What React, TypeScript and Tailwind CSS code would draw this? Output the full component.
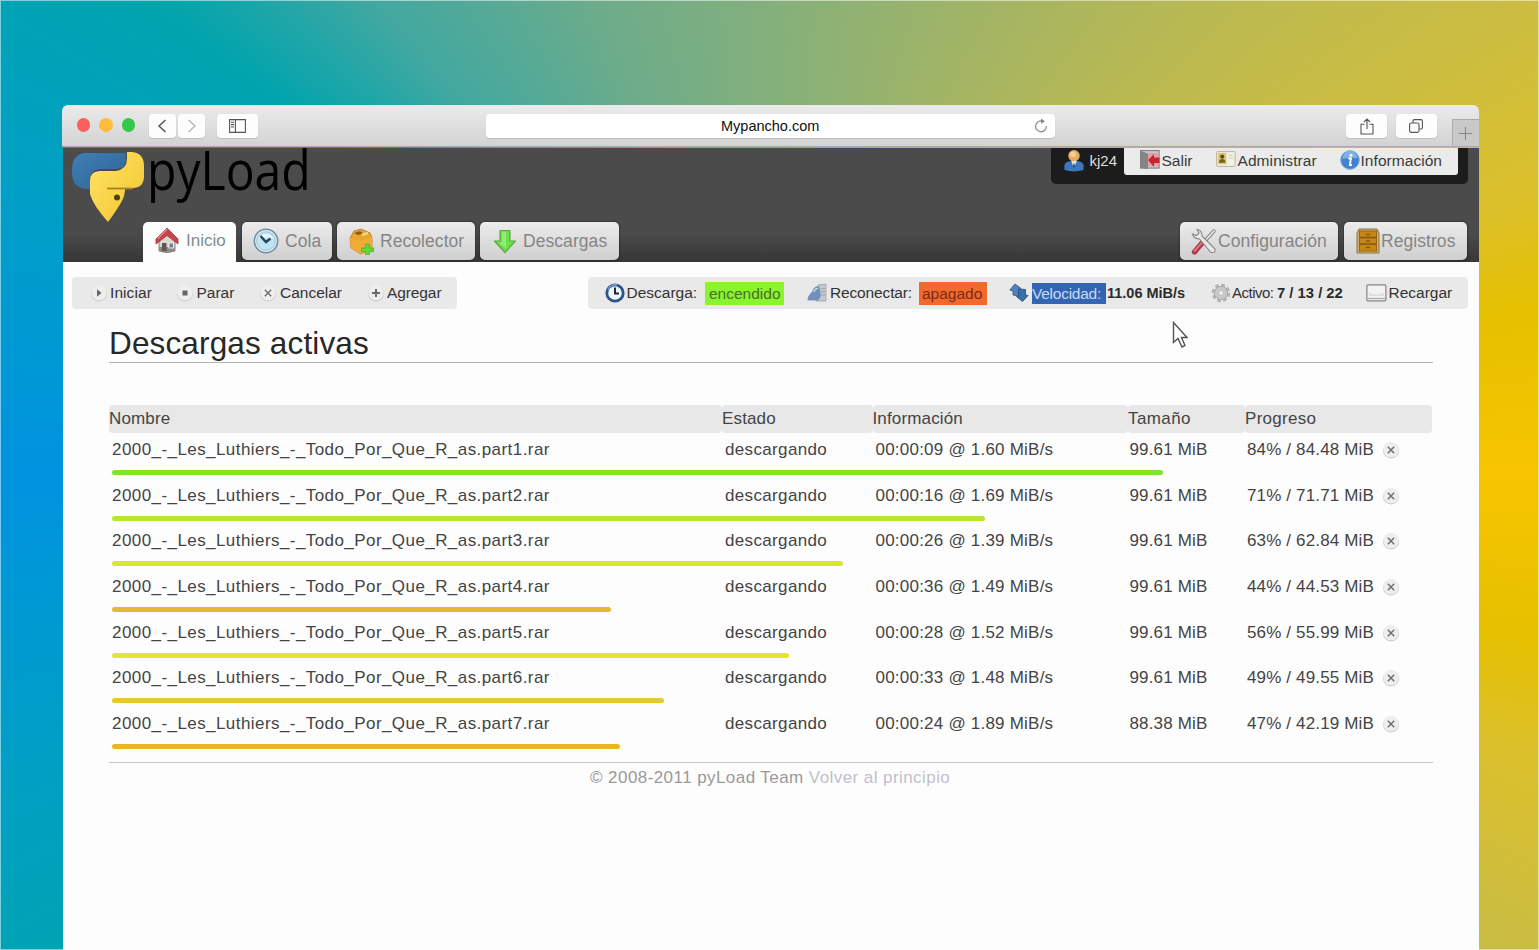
import React from "react";

type IconProps = { className?: string };

const HomeIcon = ({ className }: IconProps) => (
  <svg viewBox="0 0 24 27" className={className}>
    <path d="M4 13 L12 5 L20 13 V24 Q12 27 4 24Z" fill="#d9d6d2" stroke="#8b8482" strokeWidth="1" />
    <path d="M4 20 H20 V24 Q12 27 4 24Z" fill="#8d8987" />
    <rect x="7" y="16" width="4.5" height="8" fill="#5d5557" />
    <rect x="14" y="16" width="4.5" height="5" fill="#70848f" stroke="#fff" strokeWidth=".8" />
    <path d="M12 1 L1 12 V17 L12 8.5 L23 17 V12Z" fill="#c9444a" stroke="#a03a40" strokeWidth=".8" />
    <path d="M12 2 L3 11.5" stroke="#ee8b8c" strokeWidth="1.2" />
  </svg>
);

const QueueIcon = ({ className }: IconProps) => (
  <svg viewBox="0 0 26 26" className={className}>
    <circle cx="13" cy="13" r="11.7" fill="#e4eef2" stroke="#718ba0" strokeWidth="1.6" />
    <circle cx="13" cy="13" r="9.3" fill="#bfe3f5" stroke="#8fb5ce" strokeWidth=".8" />
    <path d="M5 11 A9 9 0 0 1 21 11 Q13 8 5 11Z" fill="#e6f6fd" />
    <path d="M7.5 8 L13 14 L17.5 10.5" fill="none" stroke="#264557" strokeWidth="2.4" />
  </svg>
);

const BoxIcon = ({ className }: IconProps) => (
  <svg viewBox="0 0 26 27" className={className}>
    <path d="M1 10 L5 3 L12 1 L21 5 L23 10 V21 L12 26 L2 20Z" fill="#e9a52e" stroke="#b57719" strokeWidth=".8" />
    <path d="M1 10 L12 13 L23 9 V21 L12 26 L2 20Z" fill="#efad38" />
    <path d="M5 5 L9 7 L14 5.5 L11 3Z" fill="#8c5c18" />
    <path d="M13 7 L19 5" stroke="#fbd57d" strokeWidth="2.4" />
    <path d="M16.5 16 h4 v4 h4 v3.6 h-4 v3.2 h-4 v-3.2 h-4 V20 h4Z" fill="#65d838" stroke="#4fb436" strokeWidth=".9" />
  </svg>
);

const DownIcon = ({ className }: IconProps) => (
  <svg viewBox="0 0 24 25" className={className}>
    <path d="M7 1.5 H17 V12 H22.5 L12 23.5 L1.5 12 H7Z" fill="#6be048" stroke="#59a848" strokeWidth="1.2" strokeLinejoin="round" />
    <path d="M9 3 H13 V19 L5 13.5 H9Z" fill="#92ee70" />
  </svg>
);

const ToolsIcon = ({ className }: IconProps) => (
  <svg viewBox="0 0 26 27" className={className}>
    <path d="M23 3 L12 15" stroke="#777" strokeWidth="3.4" strokeLinecap="round" />
    <path d="M23 3 L12 15" stroke="#eee" strokeWidth="1.8" strokeLinecap="round" />
    <path d="M11 15 L3.5 24" stroke="#a8394a" strokeWidth="5.4" strokeLinecap="round" />
    <path d="M11 14.5 L3.5 23" stroke="#de7684" strokeWidth="2" strokeLinecap="round" />
    <path d="M6 1.5 Q11 2 11 8 L24 21 Q25 25 20 24.5 L8.5 11 Q3 11 1.5 6 L5.5 7.5 L8 5Z" fill="#e9e9e9" stroke="#858585" strokeWidth="1.1" />
  </svg>
);

const DrawerIcon = ({ className }: IconProps) => (
  <svg viewBox="0 0 24 26" className={className}>
    <path d="M3 1 H21 L23 5 V25 H1 V5Z" fill="#cdaf6d" stroke="#8b7442" strokeWidth="1" />
    <rect x="3.5" y="3" width="17" height="20" fill="#c58616" stroke="#9a6615" />
    <path d="M4 9.5 H20 M4 16 H20" stroke="#845710" strokeWidth="1.3" />
    <path d="M10 6.5 h4 M10 13 h4 M10 19.5 h4" stroke="#855a14" strokeWidth="1.3" />
  </svg>
);

const UserIcon = ({ className }: IconProps) => (
  <svg viewBox="0 0 20 24" className={className}>
    <path d="M0 22 V17 Q1 13 7 12.5 H13 Q19 13 20 17 V22 Q10 25 0 22Z" fill="#3a78bd" />
    <path d="M7 12 L10 20 L13 12Z" fill="#e4edf5" />
    <path d="M10 14 L9 18 L10 20 L11 18Z" fill="#333" />
    <circle cx="10" cy="7" r="6" fill="#e8ac60" />
    <circle cx="9" cy="5.5" r="3" fill="#f7d08f" />
  </svg>
);

const ExitIcon = ({ className }: IconProps) => (
  <svg viewBox="0 0 20 20" className={className}>
    <rect x=".6" y=".6" width="18.5" height="17.5" fill="#c9c9c9" stroke="#777" />
    <path d="M1 1 L8 3.5 V19 L1 18Z" fill="#858585" />
    <path d="M8 3 H18.5 V16 H8Z" fill="#e4a0a4" />
    <path d="M8 10 L14 4 V7.5 H19.5 V13 H14 V17Z" fill="#cc2333" />
  </svg>
);

const CardIcon = ({ className }: IconProps) => (
  <svg viewBox="0 0 21 18" className={className}>
    <rect x=".6" y="1.2" width="19.5" height="15.6" rx="1" fill="#f3f1e2" stroke="#b5b29c" />
    <rect x="2" y="2.5" width="9" height="12" fill="#dac67c" />
    <circle cx="6.5" cy="6.5" r="2.2" fill="#604b17" />
    <path d="M3 13 Q3 9 6.5 9 T10 13Z" fill="#7a631c" />
    <path d="M13 5 h4 M13 8 h5" stroke="#c9c7be" strokeWidth="1.1" />
  </svg>
);

const InfoIcon = ({ className }: IconProps) => (
  <svg viewBox="0 0 20 20" className={className}>
    <circle cx="10" cy="10" r="9.3" fill="#4283d0" stroke="#7fa9da" />
    <path d="M2.5 9 A7.5 7.5 0 0 1 17.5 8 Q10 7 2.5 9Z" fill="#7fb1e8" />
    <circle cx="11" cy="5.2" r="1.5" fill="#fff" />
    <path d="M8.3 8.5 H11 L9.8 15 H12" fill="none" stroke="#fff" strokeWidth="1.8" />
  </svg>
);

const ClockIcon = ({ className }: IconProps) => (
  <svg viewBox="0 0 20 20" className={className}>
    <circle cx="10" cy="10" r="8.2" fill="#eef4fa" stroke="#2d5488" strokeWidth="2.8" />
    <path d="M3 6.5 A8 8 0 0 1 12 2" stroke="#7ea9d5" fill="none" strokeWidth="1.4" />
    <path d="M10 4.5 V10.5 H14" fill="none" stroke="#1e2935" strokeWidth="2" />
  </svg>
);

const ReconnectIcon = ({ className }: IconProps) => (
  <svg viewBox="0 0 20 20" className={className}>
    <path d="M11 2 L19 1 V18 H9Z" fill="#c5c8cf" stroke="#9b9fa8" strokeWidth=".8" />
    <path d="M14 6 l4 -.6 M14 9 l4 -.4 M14 12 h4" stroke="#9aa0ac" />
    <path d="M6 8 Q7 3 12 4 L13 10 Q14 14 11 17 H.8 L2 13Z" fill="#6f8fbd" stroke="#6c88ae" strokeWidth=".8" />
    <path d="M7 9 Q8 5 11 5.5" stroke="#bfd2ec" fill="none" strokeWidth="1.5" />
  </svg>
);

const SpeedIcon = ({ className }: IconProps) => (
  <svg viewBox="0 0 20 20" className={className}>
    <path d="M6 1 L12 5.5 L10 7 V13 L4 12 V8 L.8 7Z" fill="#4d83be" stroke="#365f92" strokeWidth=".9" strokeLinejoin="round" />
    <path d="M9.5 6 L16.5 6.5 V12 L19 12.5 L13.5 18.5 L7.5 13.5 H9.5Z" fill="#3d6eaa" stroke="#294f7e" strokeWidth=".9" strokeLinejoin="round" />
  </svg>
);

const GearIcon = ({ className }: IconProps) => (
  <svg viewBox="0 0 20 20" className={className}>
    <circle cx="10" cy="10" r="7.6" fill="none" stroke="#b3b3b3" strokeWidth="3.4" strokeDasharray="3.6 2.37" />
    <circle cx="10" cy="10" r="6.6" fill="#c9c9c9" stroke="#a9a9a9" strokeWidth="1" />
    <circle cx="10" cy="10" r="2.8" fill="#e6e6e6" stroke="#b5b5b5" strokeWidth=".8" />
  </svg>
);

const DiskIcon = ({ className }: IconProps) => (
  <svg viewBox="0 0 21 18" className={className}>
    <rect x=".9" y=".9" width="19" height="16" rx="1.3" fill="#f2f2f2" stroke="#838383" strokeWidth="1.2" />
    <path d="M3 9 Q10 12 18 9 V12 H3Z" fill="#ddd" />
    <path d="M2 14.5 H19" stroke="#aaa" strokeWidth="1.2" />
  </svg>
);

const roundGlyphs = {
  play: "M7 5.3 L11.5 9 L7 12.7Z",
  stop: "M6.5 6.5 H11.5 V11.5 H6.5Z",
  cross: "M5.8 5.8 L12.2 12.2 M12.2 5.8 L5.8 12.2",
  plus: "M9 5 V13 M5 9 H13",
};

function RoundIcon({ kind, className }: { kind: keyof typeof roundGlyphs; className?: string }) {
  const solid = kind === "play" || kind === "stop";
  return (
    <svg viewBox="0 0 18 18" className={className}>
      <circle cx="9" cy="9.4" r="8" fill="#c6c6c6" />
      <circle cx="9" cy="8.7" r="7.7" fill="#eeeeee" />
      <path
        d={roundGlyphs[kind]}
        fill={solid ? "#666" : "none"}
        stroke={solid ? "none" : "#6c6c6c"}
        strokeWidth={kind === "plus" ? 2 : 1.4}
      />
    </svg>
  );
}

const Logo = () => (
  <svg viewBox="0 0 74 72" className="h-[72px] w-[74px] shrink-0">
    <defs>
      <linearGradient id="blue" x1="0" y1="0" x2="1" y2="1">
        <stop offset="0" stopColor="#3f7fb5" />
        <stop offset="1" stopColor="#2f6394" />
      </linearGradient>
      <linearGradient id="gold" x1="0" y1="0" x2="1" y2="1">
        <stop offset="0" stopColor="#ffe368" />
        <stop offset="1" stopColor="#f2c52c" />
      </linearGradient>
    </defs>
    <path d="M12 2 H55 V9 Q55 18 45 18 H30 Q19 18 19 29 V38 H14 Q1 36 1 22 Q0 5 12 2Z" fill="url(#blue)" />
    <path
      d="M56 1 H61 Q73 2 73 15 V26 Q73 36 63 37 H54.500 L53 45 Q51 52 37 71 Q22 54 19 43 V30 Q19 20 29 20 H45 Q56 18 56 8Z"
      fill="url(#gold)"
    />
    <path d="M36 37.500 H62" stroke="#a8841f" strokeWidth="1.800" />
    <circle cx="46" cy="46.500" r="3" fill="#4d4212" />
  </svg>
);

const SafariButton = ({ className, children }: { className: string; children: React.ReactNode }) => (
  <div className={`flex h-6 shrink-0 items-center justify-center rounded-[4px] bg-[#fdfdfd] shadow-[0_1px_1px_rgba(0,0,0,0.12)] ${className}`}>
    {children}
  </div>
);

function BrowserBar() {
  return (
    <div className="flex h-[42px] w-[1417px] shrink-0 items-start rounded-t-[6px] border-b border-[#aaa] bg-linear-to-b from-[#ebebeb] to-[#d3d3d3] pl-[14.5px] pt-[9px]">
      <div className="flex gap-[9px] pt-[4px]">
        <span className="size-[13.5px] rounded-full bg-[#fc605c]" />
        <span className="size-[13.5px] rounded-full bg-[#fdbc40]" />
        <span className="size-[13.5px] rounded-full bg-[#34c84a]" />
      </div>
      <SafariButton className="ml-[14px] w-[27px]">
        <svg viewBox="0 0 10 14" className="mr-[2px] h-[14px] w-[10px]" fill="none" stroke="#555" strokeWidth="1.5">
          <path d="M8.5 1 L2 7 L8.5 13" />
        </svg>
      </SafariButton>
      <SafariButton className="ml-[2px] w-[27px]">
        <svg viewBox="0 0 10 14" className="h-[14px] w-[10px]" fill="none" stroke="#b5b5b5" strokeWidth="1.3">
          <path d="M1.5 1 L8 7 L1.5 13" />
        </svg>
      </SafariButton>
      <SafariButton className="ml-[12px] w-[41px]">
        <svg viewBox="0 0 17 14" className="h-[14px] w-[17px]" fill="none" stroke="#555" strokeWidth="1.1">
          <path d="M.6 .6 H16.4 V13.4 H.6Z M6.4 .6 V13.4 M2 3.2 H5 M2 5.6 H5 M2 8 H5" />
        </svg>
      </SafariButton>
      <div className="ml-[228px] flex h-6 w-[569px] items-center rounded-[4px] bg-white pl-[235px] pr-[7px] text-[14.5px] text-[#111] shadow-[0_1px_1px_rgba(0,0,0,0.12)]">
        <span className="flex-1 pt-[2px]">Mypancho.com</span>
        <svg viewBox="0 0 14 16" className="h-4 w-[14px]" fill="none" stroke="#888" strokeWidth="1.2">
          <path d="M7.5 3 A5.4 5.4 0 1 0 12.4 8" />
          <path d="M7 .5 L11 3.2 L7 5.8Z" fill="#888" stroke="none" />
        </svg>
      </div>
      <SafariButton className="ml-[291px] w-[41px]">
        <svg viewBox="0 0 14 17" className="h-[17px] w-[14px]" fill="none" stroke="#555" strokeWidth="1.1">
          <path d="M4.5 6.2 H1 V16 H13 V6.2 H9.5 M7 11 V1.2 M4 4 L7 1 L10 4" />
        </svg>
      </SafariButton>
      <SafariButton className="ml-[9px] w-[41px]">
        <svg viewBox="0 0 14 14" className="mr-[2px] h-[14px] w-[14px]" fill="none" stroke="#555" strokeWidth="1.1">
          <rect x=".6" y="4" width="9.4" height="9.4" rx="1.6" />
          <path d="M4 3.8 V2 Q4 .6 5.4 .6 H12 Q13.4 .6 13.4 2 V8.6 Q13.4 10 12 10 H10.2" />
        </svg>
      </SafariButton>
      <div className="ml-[15px] mt-[5px] flex h-[27px] flex-1 items-center justify-center border-l border-t border-[#aaa] bg-[#c9c9c9]">
        <svg viewBox="0 0 13 13" className="mr-[2px] size-[13px]" stroke="#888" strokeWidth="1.1">
          <path d="M6.5 0 V13 M0 6.5 H13" />
        </svg>
      </div>
    </div>
  );
}

const tabStyle =
  "flex h-[38px] shrink-0 items-center rounded-[5px] bg-linear-to-b from-[#ececec] to-[#cfcfcf] text-[17.5px] tracking-[0.06px] text-[#858585] shadow-[0_0_2px_1px_rgba(0,0,0,0.25)]";

function Header() {
  return (
    <header className="flex h-[114px] shrink-0 flex-col bg-linear-to-b from-[#4b4b4b] from-75% to-[#363636]">
      <div className="flex h-[74px] items-start pl-2">
        <div className="flex h-[74px] w-[979.5px] shrink-0 items-start pt-[3px]">
          <Logo />
          <span className="ml-[2px] mt-[-20px] origin-left scale-x-[0.875] font-['Open_Sans',sans-serif] text-[55px] leading-[76px] text-black">
            pyLoad
          </span>
        </div>
        <div className="flex h-[36px] w-[417px] items-start rounded-b-[5px] bg-[#1c1c1c] text-[15.5px] leading-[25px]">
          <UserIcon className="ml-[13px] mt-[1px] h-[23px] w-[20px]" />
          <span className="ml-[6px] w-[34.5px] text-[15px] text-[#ddd]">kj24</span>
          <div className="flex h-[27px] w-[334px] items-start rounded-b-[3px] bg-[#ebebeb] text-[#3a3a3a]">
            <ExitIcon className="ml-[16px] mt-[2px] size-[20px]" />
            <span className="ml-[1.5px] w-[54px]">Salir</span>
            <CardIcon className="mt-[2px] h-[18px] w-[20px]" />
            <span className="ml-[2px] w-[102px] tracking-[0.08px]">Administrar</span>
            <InfoIcon className="mt-[2px] size-[20px]" />
            <span className="ml-[1px] tracking-[0.05px]">Información</span>
          </div>
        </div>
      </div>
      <nav className="flex h-10 items-start pl-20">
        <div className="flex h-[46px] w-[93px] shrink-0 items-start rounded-t-[5px] bg-[#fdfdfd] pl-[12px] pt-[5px] text-[17px] leading-[28px] text-[#7f8d90]">
          <HomeIcon className="mr-[7px] h-[27px] w-[24px]" />
          Inicio
        </div>
        <div className={`${tabStyle} ml-[6px] w-[90px] pl-[11px]`}>
          <QueueIcon className="mr-[6px] size-[26px]" />
          Cola
        </div>
        <div className={`${tabStyle} ml-[5px] w-[138px] pl-[12px]`}>
          <BoxIcon className="mr-[5px] h-[27px] w-[26px]" />
          Recolector
        </div>
        <div className={`${tabStyle} ml-[5px] w-[139px] pl-[13px]`}>
          <DownIcon className="mr-[6px] h-[25px] w-[24px]" />
          Descargas
        </div>
        <div className={`${tabStyle} ml-[561px] w-[158px] pl-[11px]`}>
          <ToolsIcon className="mr-[1px] h-[27px] w-[26px]" />
          Configuración
        </div>
        <div className={`${tabStyle} ml-[6px] w-[123px] pl-[12px]`}>
          <DrawerIcon className="mr-[1px] h-[26px] w-[24px]" />
          Registros
        </div>
      </nav>
    </header>
  );
}

function ActionBars() {
  return (
    <div className="mt-[15px] flex h-8 shrink-0 pl-[9px] text-[15.5px] text-[#333]">
      <div className="flex w-[385px] items-center rounded-[4px] bg-[#e9e9e9] pl-[18px]">
        <RoundIcon kind="play" className="size-[18px]" />
        <span className="ml-[2px] w-[66px] tracking-[0.08px]">Iniciar</span>
        <RoundIcon kind="stop" className="size-[18px]" />
        <span className="ml-[2.5px] w-[62.5px]">Parar</span>
        <RoundIcon kind="cross" className="size-[18px]" />
        <span className="ml-[3px] w-[87px]">Cancelar</span>
        <RoundIcon kind="plus" className="size-[18px]" />
        <span className="ml-[2px] tracking-[-0.1px]">Agregar</span>
      </div>
      <div className="ml-[131px] flex w-[880px] items-center rounded-[4px] bg-[#e9e9e9] pl-[17px]">
        <ClockIcon className="size-[20px]" />
        <span className="ml-[1.5px] w-[78.5px]">Descarga:</span>
        <span className="h-[23px] w-[79px] bg-[#8af52f] pl-[4px] leading-[23px] text-[#4b6e25]">encendido</span>
        <ReconnectIcon className="ml-[23px] size-[20px]" />
        <span className="ml-[3px] w-[89px] tracking-[-0.15px]">Reconectar:</span>
        <span className="h-[23px] w-[68px] bg-[#f2692c] pl-[3px] leading-[23px] text-[#7c2a16]">apagado</span>
        <SpeedIcon className="ml-[22px] size-[20px]" />
        <span className="ml-[3px] h-[21px] w-[74px] bg-[#3465b4] leading-[21px] tracking-[-0.25px] text-[#c3dcf5]">Velocidad:</span>
        <b className="ml-[1px] w-[104px] pt-px text-[14.5px] text-[#2c2c2c]">11.06 MiB/s</b>
        <GearIcon className="size-[20px]" />
        <span className="ml-[1px] w-[45px] text-[15px] tracking-[-0.5px]">Activo:</span>
        <b className="w-[89px] text-[14.8px] text-[#2c2c2c]">7 / 13 / 22</b>
        <DiskIcon className="h-[18px] w-[21px]" />
        <span className="ml-[1.5px]">Recargar</span>
      </div>
    </div>
  );
}

const downloads = [
  { part: 1, info: "00:00:09 @ 1.60 MiB/s", size: "99.61 MiB", progress: "84% / 84.48 MiB", bar: 1051, color: "#7ce62b" },
  { part: 2, info: "00:00:16 @ 1.69 MiB/s", size: "99.61 MiB", progress: "71% / 71.71 MiB", bar: 873, color: "#b9e62f" },
  { part: 3, info: "00:00:26 @ 1.39 MiB/s", size: "99.61 MiB", progress: "63% / 62.84 MiB", bar: 731, color: "#d9e82b" },
  { part: 4, info: "00:00:36 @ 1.49 MiB/s", size: "99.61 MiB", progress: "44% / 44.53 MiB", bar: 499, color: "#e5b934" },
  { part: 5, info: "00:00:28 @ 1.52 MiB/s", size: "99.61 MiB", progress: "56% / 55.99 MiB", bar: 677, color: "#e4e62c" },
  { part: 6, info: "00:00:33 @ 1.48 MiB/s", size: "99.61 MiB", progress: "49% / 49.55 MiB", bar: 552, color: "#e6c833" },
  { part: 7, info: "00:00:24 @ 1.89 MiB/s", size: "88.38 MiB", progress: "47% / 42.19 MiB", bar: 508, color: "#ecb426" },
];

const columns = "grid grid-cols-[613px_150.5px_255.5px_117px_187px]";

function Downloads() {
  return (
    <main className="ml-[46px] mt-[13px] flex w-[1324px] flex-col">
      <h1 className="h-[41px] border-b border-[#b5b5b5] text-[31.5px] leading-[43px] tracking-[0.15px] text-[#282828]">Descargas activas</h1>
      <div className="mt-[42px] text-[17px] text-[#444]">
        <div className={`${columns} h-[28px] leading-[28px] tracking-[0.15px]`}>
          <span className="rounded-[4px] bg-[#e8e8e8]">Nombre</span>
          <span className="rounded-[4px] bg-[#e8e8e8]">Estado</span>
          <span className="rounded-[4px] bg-[#e8e8e8]">Información</span>
          <span className="rounded-[4px] bg-[#e8e8e8] tracking-[0.4px]">Tamaño</span>
          <span className="rounded-[4px] bg-[#e8e8e8] tracking-[0.3px]">Progreso</span>
        </div>
        {downloads.map((d) => (
          <div key={d.part} className="h-[45.67px] pl-[3px]">
            <div className={`${columns} h-[37px] leading-[33px]`}>
              <span className="tracking-[0.43px]">2000_-_Les_Luthiers_-_Todo_Por_Que_R_as.part{d.part}.rar</span>
              <span className="tracking-[0.35px]">descargando</span>
              <span className="tracking-[0.22px]">{d.info}</span>
              <span className="-ml-[1.5px] tracking-[0.15px]">{d.size}</span>
              <span className="-ml-[1px] flex">
                <span className="w-[135px] tracking-[0.15px]">{d.progress}</span>
                <RoundIcon kind="cross" className="mt-[8px] size-[18px]" />
              </span>
            </div>
            <div className="h-[5px] rounded-full" style={{ width: d.bar, backgroundColor: d.color }} />
          </div>
        ))}
      </div>
      <footer className="mt-[9px] border-t border-[#c6c6c6] pl-[481px] text-[17px] leading-[30px] tracking-[0.43px] text-[#999]">
        © 2008-2011 pyLoad Team <span className="text-[#c0c0cc]">Volver al principio</span>
      </footer>
    </main>
  );
}

export default function App() {
  return (
    <div className="relative h-[950px] w-[1539px] overflow-hidden bg-[conic-gradient(from_0deg_at_770px_474px,#84b07c_0deg,#a6b562_28deg,#cbbd42_58deg,#dcc02a_70deg,#e5c000_77.6deg,#f8c500_90deg,#e5c000_102.4deg,#dcc02a_110deg,#cbbd42_122deg,#84b07c_180deg,#00a4ae_233deg,#00a0c4_248deg,#0093e0_270deg,#00a0c4_292deg,#00a4ae_307deg,#42a8a0_320deg,#6dac8a_340deg,#84b07c_360deg)] pl-[62px] pt-[105px] font-['Liberation_Sans',Arial,sans-serif]">
      <BrowserBar />
      <div className="ml-[1px] mt-[1px] flex h-[802px] w-[1415.5px] flex-col bg-[#fdfdfd]">
        <Header />
        <ActionBars />
        <Downloads />
      </div>
      <svg viewBox="0 0 16 28" className="absolute left-[1172px] top-[321px] h-[28px] w-[16px]">
        <path d="M1.5 1.5 V21.500 L6 17.500 L10 26 L13 24.500 L9.500 16.500 H15Z" fill="#fff" stroke="#555" strokeWidth="1.400" />
      </svg>
      <div className="pointer-events-none absolute inset-0 border border-white/50" />
    </div>
  );
}
